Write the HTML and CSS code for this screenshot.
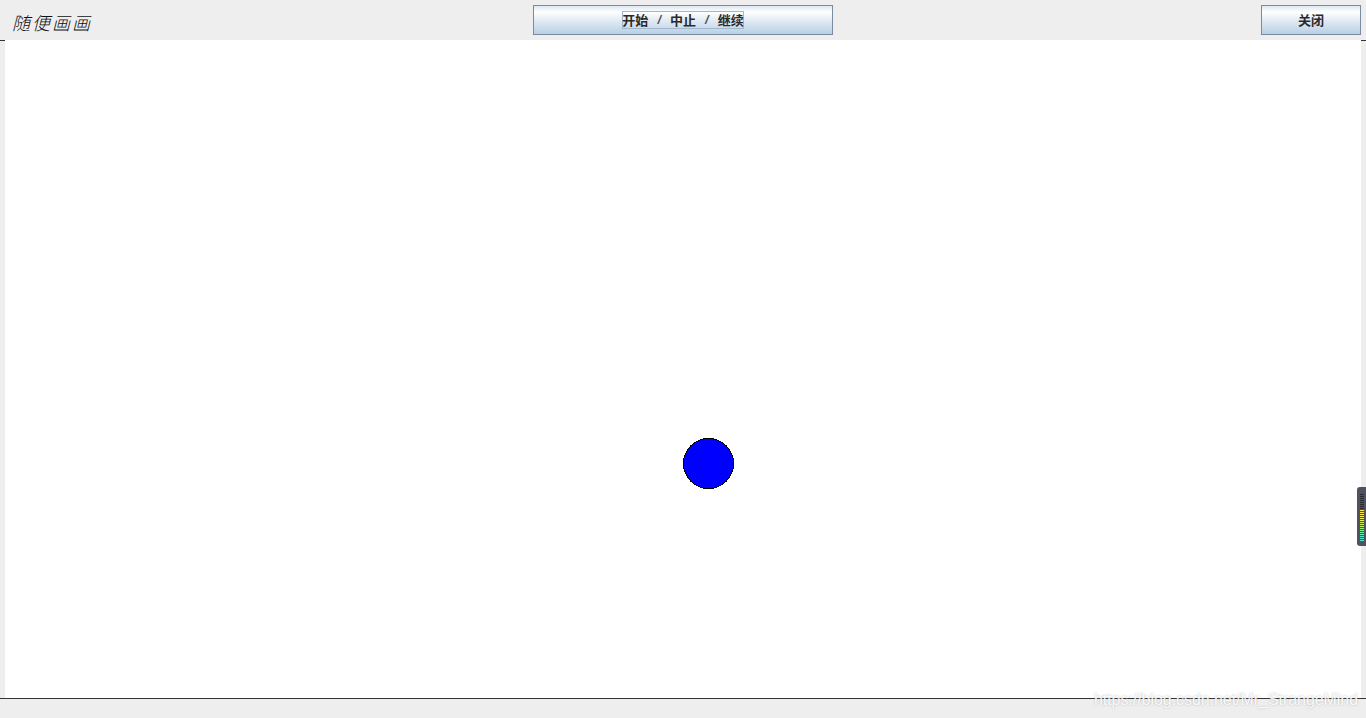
FILE: index.html
```html
<!DOCTYPE html>
<html lang="zh-CN">
<head>
<meta charset="utf-8">
<title>随便画画</title>
<link rel="stylesheet" href="styles.css">
</head>
<body>
<div class="app">
  <header class="toolbar">
    <div class="title">随便画画</div>
    <button class="btn btn-main"><span class="focus"><span>开始</span><i class="slash">/</i><span>中止</span><i class="slash">/</i><span>继续</span></span></button>
    <div class="right"><button class="btn btn-close">关闭</button></div>
  </header>
  <main class="stage">
    <div class="canvas">
      <svg class="ball" width="53" height="53" viewBox="0 0 53 53"><circle cx="26.5" cy="26.5" r="25" fill="#0000ff" stroke="#000" stroke-width="1" shape-rendering="crispEdges"/></svg>
    </div>
  </main>
  <footer class="status"></footer>
</div>
<div class="meter">
  <div class="bars">
    <b class="off"></b><b class="off"></b><b class="off"></b><b class="off"></b><b class="off"></b><b class="off"></b><b class="off"></b><b class="off"></b>
    <b class="y1"></b><b class="y1"></b><b class="y1"></b><b class="y2"></b><b class="y2"></b><b class="y2"></b><b class="y3"></b><b class="y3"></b><b class="y3"></b><b class="g1"></b><b class="g1"></b><b class="g2"></b><b class="g2"></b><b class="g3"></b><b class="g3"></b><b class="g3"></b>
  </div>
</div>
<div class="watermark">https://blog.csdn.net/Mr_StrangeMind</div>
</body>
</html>
```
FILE: styles.css
```css
html, body { margin: 0; padding: 0; height: 100%; overflow: hidden; }
body { background: #eeeeee; font-family: "Noto Sans CJK SC", "Liberation Sans", sans-serif; position: relative; }
.app { display: flex; flex-direction: column; height: 718px; }
.toolbar { height: 40px; flex: none; display: grid; grid-template-columns: 1fr 300px 1fr; align-items: start; background: #eeeeee; }
.title { padding: 10px 0 0 12px; font-size: 18px; line-height: 24px; font-style: italic; font-weight: 300; color: #111; letter-spacing: 2px; }
.right { display: flex; justify-content: flex-end; padding-right: 5px; }
.btn { display: flex; align-items: center; justify-content: center; margin: 5px 0 0; padding: 0 0 1px; height: 30px; border: 1px solid #7a8a9f; background: linear-gradient(#dde8f3 0%, #ffffff 22%, #e3ecf5 50%, #b8cfe5 100%); font-family: "Noto Sans CJK SC", sans-serif; font-size: 13px; font-weight: 700; color: #2a2a2a; }
.btn-main { width: 300px; }
.btn-close { width: 100px; }
.focus { display: flex; justify-content: center; gap: 9px; box-sizing: border-box; width: 122px; height: 18px; line-height: 16px; border: 1px solid #a3b8cc; white-space: nowrap; }
.slash { font-family: "Liberation Sans", sans-serif; color: #555; }
.stage { flex: 1; min-height: 0; display: flex; padding: 0 5px; border-top: 1px solid #333; border-bottom: 1px solid #333; }
.canvas { flex: 1; background: #ffffff; margin-top: -1px; position: relative; }
.ball { position: absolute; left: 677px; top: 397px; display: block; }
.status { height: 19px; flex: none; background: #eeeeee; }
.meter { position: absolute; left: 1357px; top: 487px; width: 9px; height: 59px; box-sizing: border-box; background: #50535f; border-radius: 3px 0 0 3px; padding: 7px 0 0 3px; }
.bars { display: flex; flex-direction: column; gap: 1px; }
.bars b { display: block; width: 4px; height: 1px; }
.off { background: #2a2c33; }
.y1 { background: #ffe040; }
.y2 { background: #eef050; }
.y3 { background: #c4f060; }
.g1 { background: #90f080; }
.g2 { background: #68f0a8; }
.g3 { background: #48e8cc; }
.watermark { position: absolute; right: 8px; top: 690px; font-family: "Liberation Sans", sans-serif; font-size: 15.9px; line-height: 20px; color: rgba(255,255,255,.9); text-shadow: 0 0 2px rgba(140,140,140,.6); white-space: nowrap; }
```
